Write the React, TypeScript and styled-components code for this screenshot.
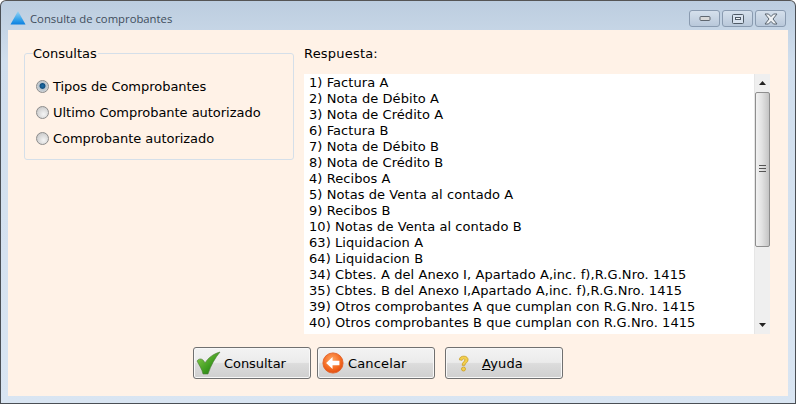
import styled, { createGlobalStyle } from "styled-components";

const GlobalStyle = createGlobalStyle`
  html, body {
    margin: 0;
    padding: 0;
    background: #fff;
  }
`;

const Win = styled.div`
  box-sizing: border-box;
  width: 796px;
  height: 404px;
  display: flex;
  flex-direction: column;
  background: linear-gradient(#bccddf 0, #d0deed 60px, #d9e5f2 100%);
  border: 1px solid #4a4f55;
  border-top-color: #555;
  border-radius: 6px 6px 0 0;
  font-family: "DejaVu Sans", Verdana, sans-serif;
  font-size: 13px;
  color: #000;
  overflow: hidden;
`;

const TitleBar = styled.div`
  box-sizing: border-box;
  height: 29px;
  display: flex;
  align-items: center;
  padding: 5px 9px 0 9px;
  flex: none;
`;

const Title = styled.div`
  margin-left: 4px;
  flex: 1;
  font-family: "Open Sans", sans-serif;
  font-size: 11.3px;
  color: #3f4d5c;
`;

const WinButtons = styled.div`
  display: flex;
  gap: 2px;
  margin-top: 1px;
`;

const WinButton = styled.div`
  box-sizing: border-box;
  width: 31px;
  height: 17px;
  display: flex;
  align-items: center;
  justify-content: center;
  border: 1px solid #8a9bb0;
  border-radius: 3px;
  background: linear-gradient(#d5e0ec, #b9c8da);
`;

const Body = styled.div`
  flex: 1;
  margin: 0 7px 7px;
  background: #fff2e7;
  display: flex;
  flex-direction: column;
  padding: 16px 18px 17px 16px;
  min-height: 0;
`;

const Top = styled.div`
  display: flex;
  gap: 10px;
`;

const Group = styled.fieldset`
  box-sizing: border-box;
  width: 270px;
  height: 114px;
  margin: 0;
  padding: 0 0 0 8px;
  border: 1px solid #d5dfe9;
  border-radius: 3px;
  display: flex;
  flex-direction: column;
`;

const Legend = styled.legend`
  padding: 0 1px 0 0;
  line-height: 15px;
`;

const Options = styled.div`
  display: flex;
  flex-direction: column;
  gap: 10px;
  margin-top: 17px;
  margin-left: 3px;
`;

const OptionRow = styled.div`
  height: 16px;
  display: flex;
  align-items: center;
  gap: 4px;
  white-space: nowrap;
  letter-spacing: -0.03px;
`;

const Radio = styled.span<{ $checked?: boolean }>`
  box-sizing: border-box;
  width: 13px;
  height: 13px;
  border-radius: 50%;
  border: 1px solid #8c8c8c;
  background: ${(p) =>
    p.$checked
      ? "radial-gradient(circle at 50% 45%, #1d6fa8 0, #0f4e80 30%, #b8c2ca 42%, #e6e6e6 100%)"
      : "radial-gradient(circle at 60% 65%, #f5f5f5 0, #cfcfcf 70%, #bcbcbc 100%)"};
`;

const Right = styled.div`
  flex: 1;
  display: flex;
  flex-direction: column;
  min-width: 0;
`;

const ListLabel = styled.div`
  height: 28px;
  line-height: 15px;
  letter-spacing: 0.2px;
`;

const ListBox = styled.div`
  height: 260px;
  display: flex;
  background: #fff;
`;

const Items = styled.div`
  flex: 1;
  overflow: hidden;
  padding: 1px 0 0 5px;
  letter-spacing: 0.07px;
`;

const Item = styled.div`
  height: 16px;
  line-height: 16px;
  white-space: nowrap;
`;

const ScrollBar = styled.div`
  width: 16px;
  flex: none;
  display: flex;
  flex-direction: column;
  background: #efefef;
  border-left: 1px solid #e6e6e6;
  box-sizing: border-box;
`;

const Arrow = styled.div`
  height: 18px;
  display: flex;
  align-items: center;
  justify-content: center;
  flex: none;
`;

const Thumb = styled.div`
  box-sizing: border-box;
  height: 155px;
  display: flex;
  align-items: center;
  justify-content: center;
  flex: none;
  border: 1px solid #8e8e8e;
  border-radius: 2px;
  background: linear-gradient(90deg, #f2f2f2 0, #e2e2e2 45%, #c4c4c4 100%);
`;

const Grip = styled.div`
  width: 7px;
  height: 7px;
  margin-top: -2px;
  background: repeating-linear-gradient(#555 0, #555 1px, transparent 1px, transparent 3px);
`;

const Track = styled.div`
  flex: 1;
`;

const Buttons = styled.div`
  display: flex;
  margin: 13px 0 0 169px;
  gap: 6px;
`;

const Button = styled.div<{ $gapBefore?: boolean; $pad: number }>`
  box-sizing: border-box;
  width: 118px;
  height: 32px;
  display: flex;
  align-items: center;
  padding-left: ${(p) => p.$pad}px;
  margin-left: ${(p) => (p.$gapBefore ? 4 : 0)}px;
  border: 1px solid #707070;
  border-radius: 3px;
  box-shadow: inset 0 0 0 1px #f8f8f8;
  background: linear-gradient(#f3f3f3 0, #ebebeb 48%, #dcdcdc 52%, #cfcfcf 100%);
`;

const ButtonIcon = styled.svg`
  flex: none;
`;

const ButtonLabel = styled.span<{ $left: number; $tight?: boolean }>`
  margin-left: ${(p) => p.$left}px;
  letter-spacing: ${(p) => (p.$tight ? "-0.05px" : "0.15px")};
`;

const Hotkey = styled.span`
  text-decoration: underline;
`;

const respuestas = [
  "1) Factura A",
  "2) Nota de Débito A",
  "3) Nota de Crédito A",
  "6) Factura B",
  "7) Nota de Débito B",
  "8) Nota de Crédito B",
  "4) Recibos A",
  "5) Notas de Venta al contado A",
  "9) Recibos B",
  "10) Notas de Venta al contado B",
  "63) Liquidacion A",
  "64) Liquidacion B",
  "34) Cbtes. A del Anexo I, Apartado A,inc. f),R.G.Nro. 1415",
  "35) Cbtes. B del Anexo I,Apartado A,inc. f),R.G.Nro. 1415",
  "39) Otros comprobantes A que cumplan con R.G.Nro. 1415",
  "40) Otros comprobantes B que cumplan con R.G.Nro. 1415",
];

function App() {
  return (
    <>
      <GlobalStyle />
      <Win>
        <TitleBar>
          <svg width="16" height="16" viewBox="0 0 16 16">
            <defs>
              <linearGradient id="tri" x1="0" y1="0" x2="0" y2="1">
                <stop offset="0" stopColor="#9fd4f2" />
                <stop offset="0.55" stopColor="#3fa9ec" />
                <stop offset="1" stopColor="#0a7fe0" />
              </linearGradient>
            </defs>
            <path d="M8 1 L15.5 14.5 H0.5 Z" fill="url(#tri)" />
          </svg>
          <Title>Consulta de comprobantes</Title>
          <WinButtons>
            <WinButton>
              <svg width="12" height="7" viewBox="0 0 12 7">
                <rect x="1" y="1.5" width="10" height="4" rx="1" fill="#d8d8d8" stroke="#5f6770" />
              </svg>
            </WinButton>
            <WinButton>
              <svg width="12" height="10" viewBox="0 0 12 10">
                <rect x="0.5" y="0.5" width="11" height="9" rx="1" fill="#d8e2ee" stroke="#4f5a66" />
                <rect x="3.5" y="3.5" width="5" height="2" fill="#f4f6f8" stroke="#4f5a66" />
              </svg>
            </WinButton>
            <WinButton>
              <svg width="14" height="12" viewBox="0 0 14 12">
                <path
                  d="M1 1 H4.5 L7 3.6 L9.5 1 H13 L9 6 L13 11 H9.5 L7 8.4 L4.5 11 H1 L5 6 Z"
                  fill="#eef1f4"
                  stroke="#5a6570"
                />
              </svg>
            </WinButton>
          </WinButtons>
        </TitleBar>
        <Body>
          <Top>
            <Group>
              <Legend>Consultas</Legend>
              <Options>
                <OptionRow>
                  <Radio $checked />
                  Tipos de Comprobantes
                </OptionRow>
                <OptionRow>
                  <Radio />
                  Ultimo Comprobante autorizado
                </OptionRow>
                <OptionRow>
                  <Radio />
                  Comprobante autorizado
                </OptionRow>
              </Options>
            </Group>
            <Right>
              <ListLabel>Respuesta:</ListLabel>
              <ListBox>
                <Items>
                  {respuestas.map((r) => (
                    <Item key={r}>{r}</Item>
                  ))}
                </Items>
                <ScrollBar>
                  <Arrow>
                    <svg width="7" height="4" viewBox="0 0 7 4">
                      <path d="M3.5 0 L7 4 H0 Z" fill="#222" />
                    </svg>
                  </Arrow>
                  <Thumb>
                    <Grip />
                  </Thumb>
                  <Track />
                  <Arrow>
                    <svg width="7" height="4" viewBox="0 0 7 4">
                      <path d="M0 0 H7 L3.5 4 Z" fill="#222" />
                    </svg>
                  </Arrow>
                </ScrollBar>
              </ListBox>
            </Right>
          </Top>
          <Buttons>
            <Button $pad={2}>
              <ButtonIcon width="25" height="24" viewBox="0 0 25 24">
                <defs>
                  <linearGradient id="chk" x1="0" y1="0" x2="1" y2="1">
                    <stop offset="0" stopColor="#8fd14f" />
                    <stop offset="0.6" stopColor="#3c9a1e" />
                    <stop offset="1" stopColor="#1c6a10" />
                  </linearGradient>
                </defs>
                <path
                  d="M1 10 C3 7 7 7 9 12 C12 7 17 3 24 1 C19 7 15 14 12 23 C10 23 8 23 7 23 C6 18 3 14 1 10 Z"
                  fill="url(#chk)"
                  stroke="#4d7a3a"
                  strokeWidth="0.6"
                />
              </ButtonIcon>
              <ButtonLabel $left={3} $tight>Consultar</ButtonLabel>
            </Button>
            <Button $pad={4}>
              <ButtonIcon width="22" height="22" viewBox="0 0 24 24">
                <defs>
                  <radialGradient id="can" cx="0.45" cy="0.35" r="0.75">
                    <stop offset="0" stopColor="#ffa868" />
                    <stop offset="0.6" stopColor="#f4691f" />
                    <stop offset="1" stopColor="#d8400c" />
                  </radialGradient>
                </defs>
                <circle cx="12" cy="12" r="11" fill="url(#can)" stroke="#e2622a" />
                <path d="M4.5 12 L11.5 5.5 V9.5 H19 V14.5 H11.5 V18.5 Z" fill="#fff" />
              </ButtonIcon>
              <ButtonLabel $left={4}>Cancelar</ButtonLabel>
            </Button>
            <Button $gapBefore $pad={12}>
              <ButtonIcon width="11" height="17" viewBox="0 0 12 18">
                <path
                  d="M1.5 5 C1.5 2 4 1 6.5 1 C9.5 1 11 3 11 5 C11 8 7.5 8.5 7.5 11 H4.5 C4.5 7.5 7.5 7 7.5 5 C7.5 3.5 5 3.5 4.5 5.5 Z"
                  fill="#f3cf4d"
                  stroke="#c79a1a"
                  strokeWidth="0.8"
                />
                <circle cx="6" cy="15" r="2.2" fill="#f3cf4d" stroke="#c79a1a" strokeWidth="0.8" />
              </ButtonIcon>
              <ButtonLabel $left={13}>
                <Hotkey>A</Hotkey>yuda
              </ButtonLabel>
            </Button>
          </Buttons>
        </Body>
      </Win>
    </>
  );
}

export default App;
